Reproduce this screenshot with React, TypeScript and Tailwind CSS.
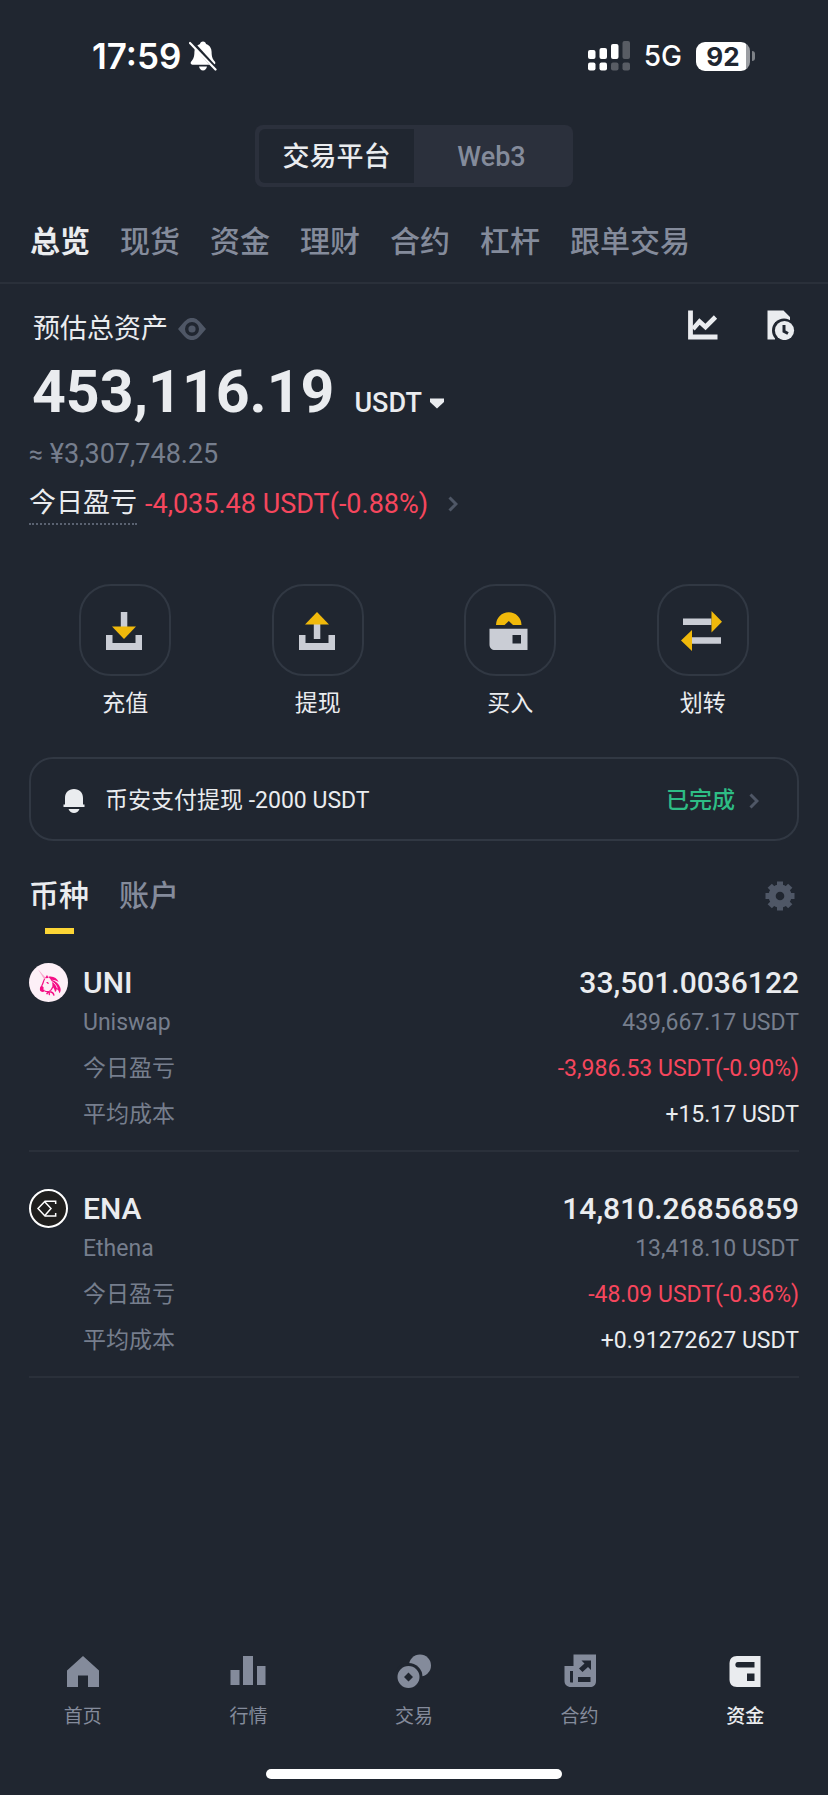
import React, { useState } from 'react';
import { clsx } from 'clsx';

const ACCOUNT_TABS = ['总览', '现货', '资金', '理财', '合约', '杠杆', '跟单交易'];

const ASSETS = [
  {
    symbol: 'UNI',
    name: 'Uniswap',
    amount: '33,501.0036122',
    value: '439,667.17 USDT',
    pnl: '-3,986.53 USDT(-0.90%)',
    cost: '+15.17 USDT',
    icon: UniLogo,
  },
  {
    symbol: 'ENA',
    name: 'Ethena',
    amount: '14,810.26856859',
    value: '13,418.10 USDT',
    pnl: '-48.09 USDT(-0.36%)',
    cost: '+0.91272627 USDT',
    icon: EnaLogo,
  },
];

const ACTIONS = [
  { label: '充值', icon: DepositIcon },
  { label: '提现', icon: WithdrawIcon },
  { label: '买入', icon: BuyIcon },
  { label: '划转', icon: TransferIcon },
];

const NAV_ITEMS = [
  { label: '首页', icon: HomeIcon },
  { label: '行情', icon: MarketIcon },
  { label: '交易', icon: TradeIcon },
  { label: '合约', icon: FuturesIcon },
  { label: '资金', icon: WalletIcon },
];

/* ---------- Status bar ---------- */

function BellOffIcon() {
  return (
    <svg width="28" height="30" viewBox="0 0 28 30" fill="none">
      <path d="M14 .5c1.7 0 2.8 1 3 2.400 3.600 1.200 5.600 4.200 5.600 8.100 0 5.200 1.200 7.300 3.200 9.500 1 1.200.7 3.200-1.200 3.200H3.400c-1.900 0-2.200-2-1.200-3.200C4.200 18.300 5.400 16.200 5.400 11c0-3.900 2-6.900 5.600-8.100.2-1.400 1.300-2.400 3-2.400z" fill="#fff" />
      <path d="M10 25.500h8c-.4 2.300-1.900 4-4 4s-3.600-1.700-4-4z" fill="#fff" />
      <path d="M2.500 1L28 29" stroke="#202630" strokeWidth="4" />
      <path d="M1 2L26.500 28.500" stroke="#fff" strokeWidth="2.200" strokeLinecap="round" />
    </svg>
  );
}

function SignalIcon() {
  return (
    <svg width="42" height="30" viewBox="0 0 42 30" fill="#fff">
      <rect x="0" y="9" width="7.500" height="9" rx="2" />
      <rect x="11.500" y="7" width="7.500" height="11" rx="2" />
      <rect x="23" y="3" width="7.500" height="15" rx="2" />
      <rect x="34.500" y="0" width="7.500" height="18" rx="2" opacity=".25" />
      <rect x="0" y="21.500" width="7.500" height="8" rx="2" />
      <rect x="11.500" y="21.500" width="7.500" height="8" rx="2" />
      <rect x="23" y="21.500" width="7.500" height="8" rx="2" opacity=".25" />
      <rect x="34.500" y="21.500" width="7.500" height="8" rx="2" opacity=".25" />
    </svg>
  );
}

function StatusBar() {
  return (
    <div className="flex h-28 items-center justify-between pr-[73px] pl-[92px] font-['Inter',sans-serif] text-white">
      <div className="flex items-center gap-2">
        <span className="text-[35px] leading-10 font-semibold">17:59</span>
        <BellOffIcon />
      </div>
      <div className="flex items-center">
        <SignalIcon />
        <span className="ml-[14px] text-[28px] leading-10 font-medium">5G</span>
        <div className="ml-[14px] flex h-[29px] w-[54px] items-center justify-center rounded-[9px] bg-gradient-to-r from-white from-92% to-[#9a9da2] to-92% text-[26px] leading-[29px] font-bold text-[#202630]">
          92
        </div>
        <span className="ml-0.5 h-2.5 w-[3px] rounded-r-full bg-[#7d8187]" />
      </div>
    </div>
  );
}

/* ---------- Small icons ---------- */

function EyeIcon() {
  return (
    <svg width="28" height="22" viewBox="0 0 28 22">
      <path fillRule="evenodd" fill="#4f5766" d="M14 0c4.500 0 6.500 2 14 11-7.500 9-9.500 11-14 11S7.500 20 0 11C7.500 2 9.500 0 14 0zm0 4a7 7 0 100 14 7 7 0 000-14z" />
      <circle cx="14" cy="11" r="3.600" fill="#4f5766" />
    </svg>
  );
}

function ChartIcon() {
  return (
    <svg width="30" height="30" viewBox="0 0 30 30" fill="none" stroke="#eaecef">
      <path d="M2.500 0.500v26.500H29.500" strokeWidth="4.800" />
      <path d="M5 19l6.500-7.500 6 5.500 10-10" strokeWidth="4.600" />
    </svg>
  );
}

function HistoryIcon() {
  return (
    <svg width="28" height="30" viewBox="0 0 28 30">
      <path d="M0.500 0.500h16L23 7v5H8v17.500H0.500z" fill="#eaecef" />
      <circle cx="17" cy="20.500" r="12" fill="#202630" />
      <circle cx="17.500" cy="20.500" r="9.600" fill="#eaecef" />
      <path d="M17 15v6.300l4 2.200" fill="none" stroke="#202630" strokeWidth="3" />
    </svg>
  );
}

function ChevronRight() {
  return (
    <svg width="10" height="16" viewBox="0 0 10 16" fill="none">
      <path d="M1.500 1.500L8 8l-6.500 6.500" stroke="#4f5766" strokeWidth="3" />
    </svg>
  );
}

function BellIcon() {
  return (
    <svg width="22" height="24" viewBox="0 0 22 24" fill="#eaecef">
      <path d="M11 0c5.500 0 9 3.500 9 9v6.500h1.500V18h-21v-2.500H2V9c0-5.500 3.500-9 9-9z" />
      <path d="M5.500 20h11c-1 2.600-3 4-5.500 4s-4.500-1.400-5.500-4z" />
    </svg>
  );
}

function GearIcon() {
  return (
    <svg width="30" height="30" viewBox="0 0 30 30" fill="#4f5766">
      {[0, 45, 90, 135].map((deg) => (
        <rect key={deg} x="12" y="0.500" width="6" height="29" transform={`rotate(${deg} 15 15)`} />
      ))}
      <circle cx="15" cy="15" r="11.500" />
      <circle cx="15" cy="15" r="4.300" fill="#202630" />
    </svg>
  );
}

/* ---------- Quick action icons ---------- */

function DepositIcon() {
  return (
    <svg width="42" height="42" viewBox="0 0 42 42">
      <path d="M3 26h6.500v8h23v-8H39v15H3z" fill="#cacdd5" />
      <path d="M17.800 3h6.500v15h-6.500z" fill="#cacdd5" />
      <path d="M9 17.500h24L21 30z" fill="#f0b90b" />
    </svg>
  );
}

function WithdrawIcon() {
  return (
    <svg width="42" height="42" viewBox="0 0 42 42">
      <path d="M3 26h6.500v8h23v-8H39v15H3z" fill="#cacdd5" />
      <path d="M17.800 15h6.500v15h-6.500z" fill="#cacdd5" />
      <path d="M9 15.500h24L21 3z" fill="#f0b90b" />
    </svg>
  );
}

function BuyIcon() {
  return (
    <svg width="42" height="42" viewBox="0 0 42 42">
      <path d="M8 16a12.500 12.500 0 0125.500 0h-8.500l-4.200-4-4.200 4z" fill="#f0b90b" />
      <path fillRule="evenodd" d="M1.500 19.800h38V41H7c-3.300 0-5.500-2-5.500-5.500zM24.500 26v8.500H33V26z" fill="#cacdd5" />
    </svg>
  );
}

function TransferIcon() {
  return (
    <svg width="42" height="42" viewBox="0 0 42 42">
      <path d="M2 9.500H30.500V16H2zM10.500 28.300h29.500v6.500H10.500z" fill="#cacdd5" />
      <path d="M30.500 2l10.500 10.700-10.500 10.800zM11 21v21L0 31.500z" fill="#f0b90b" />
    </svg>
  );
}

/* ---------- Coin logos ---------- */

function UniLogo() {
  return (
    <svg width="39" height="39" viewBox="0 0 117 117" fill="none">
      <circle cx="58.500" cy="58.500" r="58.500" fill="#fdf0f7" />
      {/* horn and ear */}
      <path d="M27 19l18 29 5-4z" fill="#f7a5cb" />
      <path d="M48 46l6-10 5 9z" fill="#f50d85" />
      {/* face outline */}
      <path d="M47 47c-4 7-4 13-8 20-4 6-6 9-4 15" stroke="#f50d85" strokeWidth="3.500" />
      <path d="M37 68c-5 6-6 13-2 17 4 3 9 3 12-1 1-3-2-4-5-5 4-3 3-8-5-11z" fill="#f50d85" />
      <path d="M52 57c4-1 7 1 8 5-4 1-7-1-8-5z" fill="#f50d85" />
      {/* mane */}
      <path d="M58 41c15-3 26 4 31 16-8-5-14-7-21-7 12 4 22 12 26 24 2 7 1 12-3 17-1-7-4-11-8-13 0 4-2 7-5 9-1-8-3-12-8-16 2-12-3-22-12-30z" fill="#f50d85" />
      <path d="M67 55c9 4 15 11 18 21" stroke="#fdf0f7" strokeWidth="2.500" />
      {/* jaw and neck */}
      <path d="M47 84c6 3 13 2 18-2 3-3 5-6 6-10" stroke="#f50d85" strokeWidth="3.500" />
      <path d="M53 94c2-6 7-8 13-7 5 1 8 5 9 11M62 88c-2 3-2 6 0 8" stroke="#f50d85" strokeWidth="4" />
    </svg>
  );
}

function EnaLogo() {
  return (
    <svg width="39" height="39" viewBox="0 0 117 117" fill="none">
      <circle cx="58.500" cy="58.500" r="55.500" fill="#201f1e" stroke="#fff" strokeWidth="6" />
      <path d="M80 45V37H48L27 58.500 48 81H80V72" stroke="#fff" strokeWidth="4.500" />
      <path d="M47 38L66 58.500 47 80" stroke="#fff" strokeWidth="4.500" />
    </svg>
  );
}

/* ---------- Bottom nav icons ---------- */

function HomeIcon() {
  return (
    <svg width="36" height="36" viewBox="0 0 36 36" fill="currentColor">
      <path d="M18 3l16 14.500V34H23V22.500H13V34H2V17.500z" />
    </svg>
  );
}

function MarketIcon() {
  return (
    <svg width="36" height="36" viewBox="0 0 36 36" fill="currentColor">
      <path d="M0.500 17h9v15h-9zM13 3h10v29H13zM27 13h8.500v19H27z" />
    </svg>
  );
}

function TradeIcon() {
  return (
    <svg width="36" height="36" viewBox="0 0 36 36">
      <circle cx="24" cy="12.500" r="11" fill="currentColor" />
      <circle cx="12.500" cy="24" r="14" fill="#202630" />
      <path fillRule="evenodd" fill="currentColor" d="M12.500 13a11 11 0 100 22 11 11 0 000-22zm0 6.500L17 24l-4.500 4.500L8 24z" />
    </svg>
  );
}

function FuturesIcon() {
  return (
    <svg width="36" height="36" viewBox="0 0 36 36">
      <path d="M11.500 1.500H34V28c0 4-2.500 6-6 6H9c-4 0-6.500-2.500-6.500-6V13h9z" fill="currentColor" />
      <path d="M8 18h3v11.500H9c-.7 0-1-.5-1-1zM16 24h12.500v5H16z" fill="#202630" />
      <path d="M19.500 7.500h9.500v9.500l-3-3-5.500 5-3.500-3.500 5.500-5z" fill="#202630" />
    </svg>
  );
}

function WalletIcon() {
  return (
    <svg width="36" height="36" viewBox="0 0 36 36">
      <path d="M10 3h23.500v31H10c-5 0-7.500-3-7.500-7.500V10.500C2.500 6 5 3 10 3z" fill="currentColor" />
      <path d="M11 9h16.500v5.500H11c-3.500 0-3.500-5.500 0-5.500zM20 20.500h7.500V28H20z" fill="#202630" />
    </svg>
  );
}

export default function App() {
  const [platform, setPlatform] = useState('交易平台');
  const [accountTab, setAccountTab] = useState('总览');
  const [listTab, setListTab] = useState('币种');
  const [page, setPage] = useState('资金');

  return (
    <div className="flex min-h-screen flex-col bg-[#202630] font-['Roboto','Noto_Sans_CJK_SC',sans-serif] text-[#eaecef]">
      <StatusBar />

      {/* Platform switch */}
      <div className="mx-auto mt-[13px] flex h-[62px] w-[318px] rounded-lg bg-[#2b303c] p-1">
        {['交易平台', 'Web3'].map((item) => (
          <button
            key={item}
            onClick={() => setPlatform(item)}
            className={clsx(
              'flex-1 rounded-l-md pt-0.5 text-[27px] leading-10 font-medium',
              platform === item ? 'bg-[#202630]' : 'text-[#848b9b]'
            )}
          >
            {item}
          </button>
        ))}
      </div>

      {/* Account tabs */}
      <nav className="flex gap-[30px] border-b-2 border-[#2a303a] px-[30px] pt-[35px] pb-5">
        {ACCOUNT_TABS.map((tab) => (
          <button
            key={tab}
            onClick={() => setAccountTab(tab)}
            className={clsx(
              'text-[30px] leading-10 whitespace-nowrap',
              accountTab === tab ? 'font-bold' : 'font-medium text-[#848b9b]'
            )}
          >
            {tab}
          </button>
        ))}
      </nav>

      <main className="px-[29px] pt-6">
        {/* Balance */}
        <section>
          <div className="flex items-start justify-between">
            <div className="flex items-center gap-2.5 pl-1">
              <h1 className="text-[27px] leading-[42px]">预估总资产</h1>
              <button aria-label="隐藏余额">
                <EyeIcon />
              </button>
            </div>
            <div className="flex gap-[49px] pt-0.5 pr-1">
              <button aria-label="走势">
                <ChartIcon />
              </button>
              <button aria-label="历史记录">
                <HistoryIcon />
              </button>
            </div>
          </div>

          <div className="mt-1.5 flex items-baseline gap-5 pl-[3px]">
            <span className="text-[59px] leading-[72px] font-bold">453,116.19</span>
            <button className="flex items-center gap-2 text-[27px] leading-10 font-medium">
              USDT
              <svg width="14" height="11" viewBox="0 0 14 11" fill="#eaecef">
                <path d="M0 0.500h14V4L7 10.500 0 4z" />
              </svg>
            </button>
          </div>

          <p className="mt-2 text-[27px] leading-9 text-[#767e8d]">
            <span className="text-[25px]">≈</span> ¥3,307,748.25
          </p>

          <div className="mt-2.5 flex items-center">
            <span className="border-b-2 border-dotted border-[#5a6271] text-[27px] leading-10">今日盈亏</span>
            <button className="ml-2 flex items-center gap-5 text-[27px] leading-10 text-[#f6465d]">
              -4,035.48 USDT(-0.88%)
              <ChevronRight />
            </button>
          </div>
        </section>

        {/* Quick actions */}
        <section className="mt-[59px] grid grid-cols-4">
          {ACTIONS.map(({ label, icon: Icon }) => (
            <button key={label} className="flex flex-col items-center gap-3">
              <span className="flex size-[92px] items-center justify-center rounded-[32px] border-2 border-[#313843] pr-0.5">
                <Icon />
              </span>
              <span className="text-[23px] leading-8">{label}</span>
            </button>
          ))}
        </section>

        {/* Latest notification */}
        <button className="mt-[37px] flex h-[84px] w-full items-center rounded-3xl border-2 border-[#313843] px-8 pt-1 text-[23px] leading-8">
          <BellIcon />
          <span className="ml-5">币安支付提现 -2000 USDT</span>
          <span className="mr-[14px] ml-auto font-medium text-[#2ebd85]">已完成</span>
          <span className="pr-1.5">
            <ChevronRight />
          </span>
        </button>

        {/* Assets */}
        <section className="mt-[35px]">
          <div className="flex items-start justify-between">
            <div className="flex gap-[30px]">
              {['币种', '账户'].map((tab) => (
                <button
                  key={tab}
                  onClick={() => setListTab(tab)}
                  className={clsx(
                    'flex flex-col items-center gap-3 text-[30px] leading-10 font-medium',
                    listTab !== tab && 'text-[#848b9b]'
                  )}
                >
                  {tab}
                  {listTab === tab && <span className="h-1.5 w-[29px] bg-[#fcd535]" />}
                </button>
              ))}
            </div>
            <button aria-label="设置" className="flex h-10 items-center pr-1">
              <GearIcon />
            </button>
          </div>

          <ul className="mt-[29px] flex flex-col gap-[37px]">
            {ASSETS.map(({ icon: Icon, ...asset }) => (
              <li key={asset.symbol} className="flex gap-[15px] border-b-2 border-[#2a303a] pb-3">
                <Icon />
                <div className="flex-1 text-[23px]">
                  <div className="flex justify-between text-[30px] leading-10 font-medium">
                    <h2>{asset.symbol}</h2>
                    <span>{asset.amount}</span>
                  </div>
                  <div className="mb-1 flex justify-between leading-[39px] text-[#767e8d]">
                    <span>{asset.name}</span>
                    <span>{asset.value}</span>
                  </div>
                  <div className="flex justify-between leading-[46px]">
                    <span className="text-[#767e8d]">今日盈亏</span>
                    <span className="text-[#f6465d]">{asset.pnl}</span>
                  </div>
                  <div className="flex justify-between leading-[46px]">
                    <span className="text-[#767e8d]">平均成本</span>
                    <span>{asset.cost}</span>
                  </div>
                </div>
              </li>
            ))}
          </ul>
        </section>
      </main>

      {/* Bottom navigation */}
      <footer className="mt-auto pt-10 pb-4">
        <nav className="grid grid-cols-5">
          {NAV_ITEMS.map(({ label, icon: Icon }) => (
            <button
              key={label}
              onClick={() => setPage(label)}
              className={clsx(
                'flex flex-col items-center gap-3.5 text-[19px] leading-7',
                page === label ? 'font-medium text-[#eaecef]' : 'text-[#848b9b]'
              )}
            >
              <Icon />
              {label}
            </button>
          ))}
        </nav>
        <div className="mx-auto mt-[38px] h-2.5 w-[296px] rounded-full bg-white" />
      </footer>
    </div>
  );
}
